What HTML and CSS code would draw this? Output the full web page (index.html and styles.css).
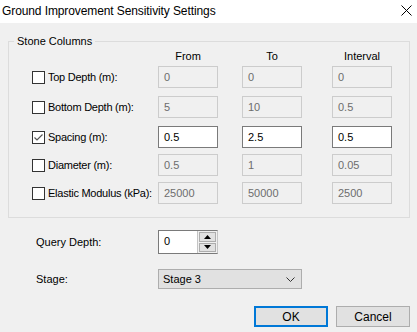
FILE: index.html
```html
<!DOCTYPE html>
<html>
<head>
<meta charset="utf-8">
<link rel="stylesheet" href="styles.css">
</head>
<body>
<div class="window">
  <div class="titlebar">
    <span class="title">Ground Improvement Sensitivity Settings</span>
    <svg class="close" width="11" height="11" viewBox="0 0 11 11"><path d="M0.5 0.5 L10.5 10.5 M10.5 0.5 L0.5 10.5" stroke="#000" stroke-width="1" fill="none"/></svg>
  </div>
  <div class="content">
    <div class="group">
      <span class="legend">Stone Columns</span>
      <div class="row head">
        <span class="lab"></span>
        <span class="colh">From</span>
        <span class="colh">To</span>
        <span class="colh last">Interval</span>
      </div>
      <div class="row r1">
        <span class="lab"><span class="cb"></span>Top Depth (m):</span>
        <span class="field dis">0</span>
        <span class="field dis">0</span>
        <span class="field dis last">0</span>
      </div>
      <div class="row r2">
        <span class="lab"><span class="cb"></span>Bottom Depth (m):</span>
        <span class="field dis">5</span>
        <span class="field dis">10</span>
        <span class="field dis last">0.5</span>
      </div>
      <div class="row r2">
        <span class="lab"><span class="cb"><svg width="11" height="11" viewBox="0 0 11 11"><path d="M1.5 5.5 L4 8 L9.5 2.5" stroke="#555" stroke-width="1.2" fill="none"/></svg></span>Spacing (m):</span>
        <span class="field">0.5</span>
        <span class="field">2.5</span>
        <span class="field last">0.5</span>
      </div>
      <div class="row r3">
        <span class="lab"><span class="cb"></span>Diameter (m):</span>
        <span class="field dis">0.5</span>
        <span class="field dis">1</span>
        <span class="field dis last">0.05</span>
      </div>
      <div class="row r3">
        <span class="lab"><span class="cb"></span>Elastic Modulus (kPa):</span>
        <span class="field dis">25000</span>
        <span class="field dis">50000</span>
        <span class="field dis last">2500</span>
      </div>
    </div>
    <div class="line query">
      <span class="llab">Query Depth:</span>
      <div class="spin">
        <span class="spintext">0</span>
        <div class="spinbtns">
          <span class="sbtn"><svg width="7" height="4" viewBox="0 0 7 4"><path d="M0 4 L3.5 0 L7 4 Z" fill="#000"/></svg></span>
          <span class="sbtn"><svg width="7" height="4" viewBox="0 0 7 4"><path d="M0 0 L3.5 4 L7 0 Z" fill="#000"/></svg></span>
        </div>
      </div>
    </div>
    <div class="line stage">
      <span class="llab">Stage:</span>
      <div class="combo">
        <span>Stage 3</span>
        <svg width="9" height="5" viewBox="0 0 9 5"><path d="M0.5 0.5 L4.5 4.5 L8.5 0.5" stroke="#333" stroke-width="1" fill="none"/></svg>
      </div>
    </div>
    <div class="buttons">
      <span class="btn ok">OK</span>
      <span class="btn">Cancel</span>
    </div>
  </div>
</div>
</body>
</html>
```
FILE: styles.css
```css
html, body {
  margin: 0;
  padding: 0;
}
body {
  width: 417px;
  height: 332px;
  background: #f0f0f0;
  font-family: "Liberation Sans", Arial, sans-serif;
  font-size: 11px;
  color: #000;
  overflow: hidden;
}
.window {
  width: 417px;
  height: 332px;
}
.titlebar {
  height: 23px;
  background: #fff;
  display: flex;
  align-items: center;
  justify-content: space-between;
  padding: 0 5px 0 2px;
}
.title {
  font-size: 12px;
  line-height: 14px;
  margin-top: -1px;
  letter-spacing: -0.1px;
}
.close {
  margin-top: -2px;
}
.content {
  padding: 18px 7px 0 8px;
}
.group {
  position: relative;
  border: 1px solid #dcdcdc;
  padding: 7px 0 13px 23px;
}
.legend {
  position: absolute;
  left: 5px;
  top: -8px;
  line-height: 14px;
  padding: 0 3px;
  background: #f0f0f0;
}
.row {
  display: flex;
  align-items: center;
}
.row > * {
  flex: none;
}
.lab {
  width: 126px;
  display: flex;
  align-items: center;
  white-space: nowrap;
  letter-spacing: -0.25px;
}
.colh,
.field {
  width: 60px;
  margin-left: 24px;
}
.row > :nth-child(2) {
  margin-left: 0;
}
.row > .last {
  margin-left: 30px;
}
.head {
  height: 14px;
  line-height: 14px;
}
.colh {
  text-align: center;
}
.r1 { margin-top: 3px; }
.r2 { margin-top: 8px; }
.r3 { margin-top: 6px; }
.cb {
  width: 13px;
  height: 13px;
  box-sizing: border-box;
  border: 1px solid #333;
  background: #fff;
  margin-right: 3px;
  display: flex;
  align-items: center;
  justify-content: center;
}
.field {
  height: 22px;
  box-sizing: border-box;
  border: 1px solid #7a7a7a;
  background: #fff;
  padding: 0 5px;
  line-height: 20px;
}
.field.dis {
  border-color: #cccccc;
  background: #f0f0f0;
  color: #6d6d6d;
}
.line {
  display: flex;
  align-items: center;
  padding-left: 28px;
}
.llab {
  width: 122px;
}
.query {
  margin-top: 12px;
}
.spin {
  width: 60px;
  height: 24px;
  box-sizing: border-box;
  display: flex;
  border: 1px solid #7a7a7a;
  border-right-color: #c4c4c4;
  background: #fff;
}
.spintext {
  flex: 1;
  padding-left: 5px;
  line-height: 21px;
}
.spinbtns {
  width: 17px;
  background: #f0f0f0;
  display: flex;
  flex-direction: column;
  gap: 1px;
  padding: 1px;
  border-left: 1px solid #c4c4c4;
}
.sbtn {
  flex: 1;
  box-sizing: border-box;
  border: 1px solid #adadad;
  background: #e1e1e1;
  display: flex;
  align-items: center;
  justify-content: center;
}
.stage {
  margin-top: 15px;
}
.combo {
  width: 144px;
  height: 20px;
  box-sizing: border-box;
  border: 1px solid #adadad;
  background: #e1e1e1;
  display: flex;
  align-items: center;
  justify-content: space-between;
  padding: 0 6px 0 4px;
}
.buttons {
  margin-top: 17px;
  display: flex;
  justify-content: flex-end;
  gap: 8px;
}
.btn {
  width: 74px;
  height: 21px;
  box-sizing: border-box;
  border: 1px solid #adadad;
  background: #e1e1e1;
  display: flex;
  align-items: center;
  justify-content: center;
  font-size: 12px;
}
.btn.ok {
  border: 2px solid #0078d7;
}
```
